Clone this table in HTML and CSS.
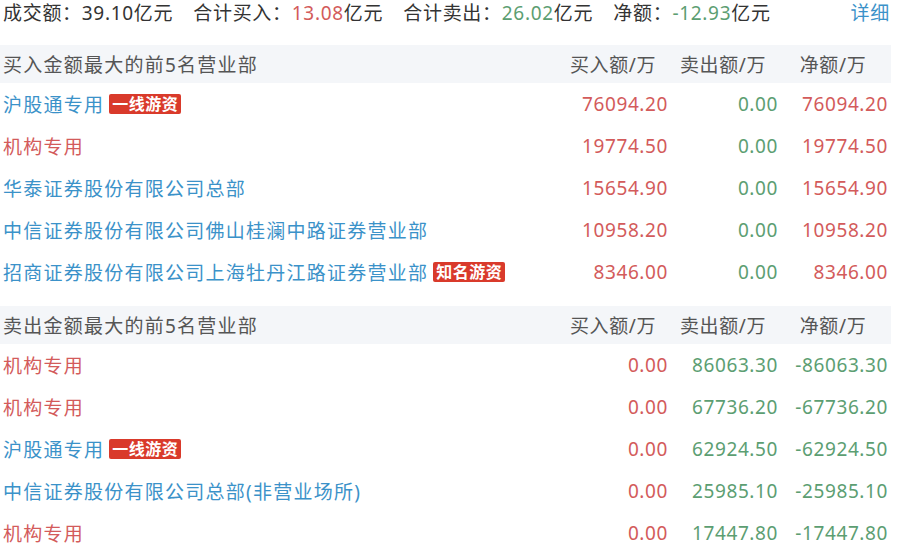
FILE: index.html
```html
<!DOCTYPE html>
<html lang="zh-CN">

<head>
  <meta charset="UTF-8">
  <title>龙虎榜</title>
  <link rel="stylesheet" href="styles.css">
</head>

<body>
  <div class="board">
    <div class="summary">
      <span class="item">成交额：39.10亿元</span>
      <span class="item">合计买入：<span class="up">13.08</span>亿元</span>
      <span class="item">合计卖出：<span class="down">26.02</span>亿元</span>
      <span class="item">净额：<span class="down">-12.93</span>亿元</span>
      <a class="more" href="#">详细</a>
    </div>

    <div class="section">
      <div class="row head">
        <div class="name">买入金额最大的前5名营业部</div>
        <div>买入额/万</div>
        <div>卖出额/万</div>
        <div>净额/万</div>
      </div>
      <div class="row">
        <div class="name"><span class="link">沪股通专用</span><span class="tag">一线游资</span></div>
        <div class="up">76094.20</div>
        <div class="down">0.00</div>
        <div class="up">76094.20</div>
      </div>
      <div class="row">
        <div class="name"><span class="org">机构专用</span></div>
        <div class="up">19774.50</div>
        <div class="down">0.00</div>
        <div class="up">19774.50</div>
      </div>
      <div class="row">
        <div class="name"><span class="link">华泰证券股份有限公司总部</span></div>
        <div class="up">15654.90</div>
        <div class="down">0.00</div>
        <div class="up">15654.90</div>
      </div>
      <div class="row">
        <div class="name"><span class="link">中信证券股份有限公司佛山桂澜中路证券营业部</span></div>
        <div class="up">10958.20</div>
        <div class="down">0.00</div>
        <div class="up">10958.20</div>
      </div>
      <div class="row">
        <div class="name"><span class="link">招商证券股份有限公司上海牡丹江路证券营业部</span><span class="tag">知名游资</span></div>
        <div class="up">8346.00</div>
        <div class="down">0.00</div>
        <div class="up">8346.00</div>
      </div>
    </div>

    <div class="section">
      <div class="row head">
        <div class="name">卖出金额最大的前5名营业部</div>
        <div>买入额/万</div>
        <div>卖出额/万</div>
        <div>净额/万</div>
      </div>
      <div class="row">
        <div class="name"><span class="org">机构专用</span></div>
        <div class="up">0.00</div>
        <div class="down">86063.30</div>
        <div class="down">-86063.30</div>
      </div>
      <div class="row">
        <div class="name"><span class="org">机构专用</span></div>
        <div class="up">0.00</div>
        <div class="down">67736.20</div>
        <div class="down">-67736.20</div>
      </div>
      <div class="row">
        <div class="name"><span class="link">沪股通专用</span><span class="tag">一线游资</span></div>
        <div class="up">0.00</div>
        <div class="down">62924.50</div>
        <div class="down">-62924.50</div>
      </div>
      <div class="row">
        <div class="name"><span class="link">中信证券股份有限公司总部(非营业场所)</span></div>
        <div class="up">0.00</div>
        <div class="down">25985.10</div>
        <div class="down">-25985.10</div>
      </div>
      <div class="row">
        <div class="name"><span class="org">机构专用</span></div>
        <div class="up">0.00</div>
        <div class="down">17447.80</div>
        <div class="down">-17447.80</div>
      </div>
    </div>
  </div>
</body>

</html>
```

FILE: styles.css
```css
body {
  margin: 0;
  background-color: #fff;
  font-family: "Noto Sans", "Noto Sans CJK SC", sans-serif;
  font-size: 19px;
  color: #333;
}

.board {
  width: 891px;
}

.summary {
  display: flex;
  align-items: center;
  gap: 20px;
  height: 24px;
  padding: 0 1px 0 3px;
  margin-bottom: 21px;
  letter-spacing: 0.7px;
}

.more {
  margin-left: auto;
  color: #3b92c9;
  text-decoration: none;
}

.section {
  margin-bottom: 13px;
}

.row {
  display: grid;
  grid-template-columns: 1fr 110px 110px 110px;
  align-items: center;
  height: 42px;
  padding: 0 3px 0 3px;
  text-align: right;
  letter-spacing: 0.6px;
}

.row.head {
  height: 38px;
  background-color: #f4f6f9;
  color: #555;
  text-align: center;
}

.name {
  display: flex;
  align-items: center;
  text-align: left;
  letter-spacing: 1.25px;
}

.link {
  color: #3b92c9;
}

.org {
  color: #d35b5b;
}

.up {
  color: #d35b5b;
}

.down {
  color: #5c9e72;
}

.tag {
  margin-left: 5px;
  padding: 0 3px;
  background-color: #d93a2b;
  color: #fff;
  font-size: 16px;
  font-weight: bold;
  line-height: 20px;
  letter-spacing: 0.5px;
  border-radius: 2px;
}
```
